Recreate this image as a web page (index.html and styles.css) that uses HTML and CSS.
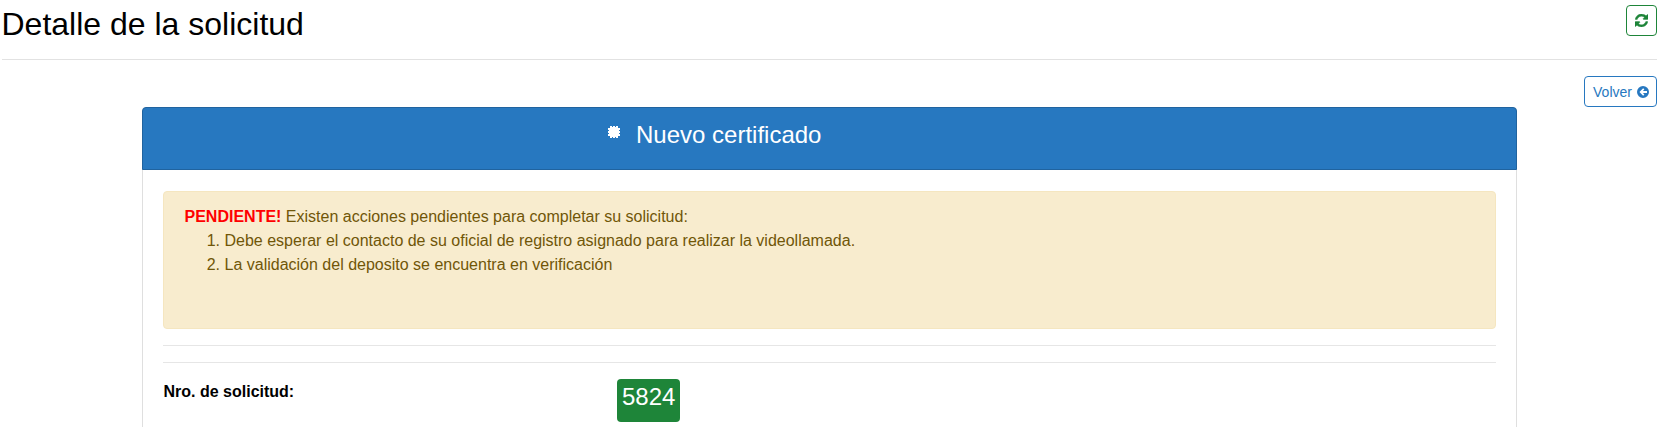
FILE: index.html
```html
<!DOCTYPE html>
<html lang="es">
<head>
    <meta charset="UTF-8">
    <meta name="viewport" content="width=device-width, initial-scale=1.0">
    <title>Detalle de la solicitud</title>
    <link rel="stylesheet" href="styles.css">
</head>
<body>
    <header class="page-header">
        <h1>Detalle de la solicitud</h1>
        <a href="#" class="btn btn-refresh" aria-label="Actualizar">
            <svg class="icon-refresh" width="13" height="13" viewBox="0 0 1536 1536" aria-hidden="true">
                <path fill="currentColor" stroke="currentColor" stroke-width="50" d="M1511 928q0 5-1 7-64 268-268 434.500t-478 166.500q-146 0-282.500-55t-243.500-157l-129 129q-19 19-45 19t-45-19-19-45v-448q0-26 19-45t45-19h448q26 0 45 19t19 45-19 45l-137 137q71 66 161 102t187 36q134 0 250-65t186-179q11-17 53-117 8-23 30-23h192q13 0 22.500 9.500t9.500 22.500zm25-800v448q0 26-19 45t-45 19h-448q-26 0-45-19t-19-45 19-45l138-138q-148-137-349-137-134 0-250 65t-186 179q-11 17-53 117-8 23-30 23h-199q-13 0-22.500-9.500t-9.500-22.500v-7q65-268 270-434.500t480-166.500q146 0 284 55.500t245 156.500l130-129q19-19 45-19t45 19 19 45z"/>
            </svg>
        </a>
    </header>

    <div class="actions">
        <a href="#" class="btn btn-back">Volver
            <svg class="icon-back" width="12" height="12" viewBox="0 0 24 24" aria-hidden="true">
                <path fill="currentColor" d="M12 0a12 12 0 1 0 0 24 12 12 0 0 0 0-24zm8 13.800h-8.300l3.100 3.100-2.500 2.500L4.900 12l7.400-7.400 2.500 2.500-3.100 3.100H20z"/>
            </svg>
        </a>
    </div>

    <section class="panel">
        <div class="panel-heading">
            <div class="panel-title">
                <svg class="seal" width="14" height="14" viewBox="0 0 14 14" aria-hidden="true">
                    <polygon fill="currentColor" shape-rendering="crispEdges" points="14,7 12.02,8.35 13.06,10.5 10.68,10.68 10.5,13.06 8.35,12.02 7,14 5.65,12.02 3.5,13.06 3.32,10.68 .94,10.5 1.98,8.35 0,7 1.98,5.65 .94,3.5 3.32,3.32 3.5,.94 5.65,1.98 7,0 8.35,1.98 10.5,.94 10.68,3.32 13.06,3.5 12.02,5.65"/>
                </svg>
                <h2>Nuevo certificado</h2>
            </div>
        </div>
        <div class="panel-body">
            <div class="alert">
                <strong>PENDIENTE!</strong> Existen acciones pendientes para completar su solicitud:
                <ol>
                    <li>Debe esperar el contacto de su oficial de registro asignado para realizar la videollamada.</li>
                    <li>La validación del deposito se encuentra en verificación</li>
                </ol>
            </div>
            <hr class="divider">
            <hr class="divider">
            <div class="detail-row">
                <div class="detail-label">Nro. de solicitud:</div>
                <div class="detail-value"><span class="badge">5824</span></div>
            </div>
        </div>
    </section>
</body>
</html>
```

FILE: styles.css
```css
html {
    overflow: hidden;
}
body {
    font-family: "Liberation Sans", Arial, sans-serif;
    font-size: 16px;
    line-height: 1.5;
    margin: 0;
    padding: 0 12px 0 2px;
    background-color: #fff;
    color: #000;
}
.page-header {
    display: flex;
    justify-content: space-between;
    align-items: flex-start;
    height: 59px;
    border-bottom: 1px solid #e2e2e2;
}
.page-header h1 {
    margin: 4px 0 0 -.5px;
    font-size: 32px;
    font-weight: 400;
    line-height: 40px;
}
.btn {
    display: inline-flex;
    align-items: center;
    justify-content: center;
    box-sizing: border-box;
    background: #fff;
    border: 1px solid;
    border-radius: 4px;
    text-decoration: none;
}
.btn-refresh {
    width: 31px;
    height: 31px;
    margin-top: 5px;
    color: #1e8539;
    border-color: #1e8539;
}
.actions {
    display: flex;
    justify-content: flex-end;
    padding-top: 16px;
}
.btn-back {
    gap: 5px;
    width: 73px;
    height: 31px;
    padding-top: 1px;
    font-size: 14px;
    color: #2778c0;
    border-color: #2778c0;
}
.icon-back {
    margin-right: -1px;
}
.panel {
    margin: 0 140px;
    height: 400px;
    box-sizing: border-box;
    border: 1px solid #dfdfdf;
    border-radius: 4px;
}
.panel-heading {
    height: 63px;
    margin: -1px -1px 0;
    box-sizing: border-box;
    background-color: #2778c0;
    border: 1px solid #20639f;
    border-radius: 4px 4px 0 0;
    color: #fff;
    display: flex;
    align-items: center;
}
.panel-title {
    display: flex;
    align-items: center;
    margin: -8px 0 0 464px;
}
.seal {
    margin: -5px 15px 0 0;
}
.panel-heading h2 {
    margin: 0;
    font-size: 24px;
    font-weight: 400;
    line-height: 32px;
}
.panel-body {
    padding: 21px 20px 0;
}
.alert {
    box-sizing: border-box;
    height: 138px;
    padding: 13px 20.5px;
    background-color: #f8ecce;
    border: 1px solid #f5e6c0;
    border-radius: 4px;
    color: #705608;
}
.alert strong {
    color: #f00;
}
.alert ol {
    margin: 0;
    padding-left: 40px;
}
.divider {
    margin: 16px 0 0;
    border: 0;
    border-top: 1px solid #e6e6e6;
}
.detail-row {
    display: flex;
    padding-top: 16px;
}
.detail-label {
    width: 454px;
    padding: 1px 0 0 .5px;
    box-sizing: border-box;
    font-weight: 700;
}
.badge {
    display: inline-block;
    box-sizing: border-box;
    height: 43px;
    padding: 0 5px;
    background-color: #1e8539;
    border-radius: 4px;
    color: #fff;
    font-size: 24px;
    line-height: 36px;
}
```
